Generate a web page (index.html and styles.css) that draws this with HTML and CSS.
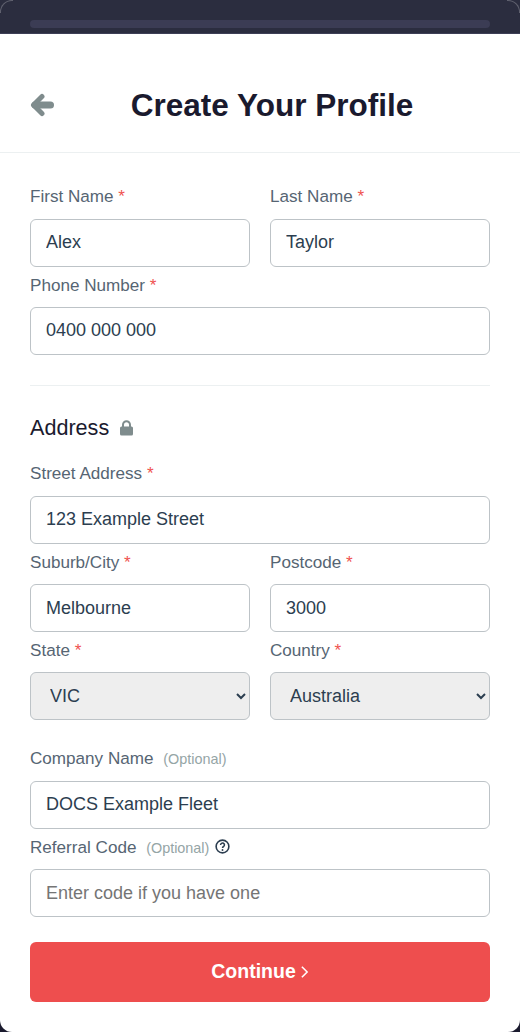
FILE: index.html
```html
<!DOCTYPE html>
<html lang="en">

<head>
    <meta charset="UTF-8">
    <meta name="viewport" content="width=device-width, initial-scale=1.0">
    <title>Create Your Profile</title>
    <link rel="stylesheet" href="styles.css">
</head>

<body>

    <div class="top-bar">
        <div class="progress"></div>
    </div>

    <div class="card">
        <div class="header">
            <a class="back" href="#" aria-label="Back">
                <svg viewBox="0 0 24 24" width="24" height="24">
                    <path d="M12 3.500 3.500 12l8.500 8.500" fill="none" stroke="#7f8c8d" stroke-width="5" stroke-linecap="round" stroke-linejoin="round" />
                    <path d="M5 12h15.500" fill="none" stroke="#7f8c8d" stroke-width="7" stroke-linecap="round" />
                </svg>
            </a>
            <h1>Create Your Profile</h1>
        </div>

        <form class="form">
            <div class="row group-start">
                <div class="field">
                    <label for="firstName">First Name <span class="req">*</span></label>
                    <input type="text" id="firstName" value="Alex">
                </div>
                <div class="field">
                    <label for="lastName">Last Name <span class="req">*</span></label>
                    <input type="text" id="lastName" value="Taylor">
                </div>
            </div>
            <div class="field">
                <label for="phone">Phone Number <span class="req">*</span></label>
                <input type="text" id="phone" value="0400 000 000">
            </div>

            <hr class="divider">

            <h2>Address
                <svg class="lock" viewBox="0 0 15 16" width="15" height="16">
                    <path d="M4 7V4.800a3.500 3.500 0 0 1 7 0V7" fill="none" stroke="#7f8c8d" stroke-width="2" />
                    <rect x="1" y="6.500" width="13" height="9" rx="1.500" fill="#7f8c8d" />
                </svg>
            </h2>

            <div class="field group-start wide-gap">
                <label for="street">Street Address <span class="req">*</span></label>
                <input type="text" id="street" value="123 Example Street">
            </div>
            <div class="row">
                <div class="field">
                    <label for="city">Suburb/City <span class="req">*</span></label>
                    <input type="text" id="city" value="Melbourne">
                </div>
                <div class="field">
                    <label for="postcode">Postcode <span class="req">*</span></label>
                    <input type="text" id="postcode" value="3000">
                </div>
            </div>
            <div class="row">
                <div class="field">
                    <label for="state">State <span class="req">*</span></label>
                    <select id="state">
                        <option>VIC</option>
                    </select>
                </div>
                <div class="field">
                    <label for="country">Country <span class="req">*</span></label>
                    <select id="country">
                        <option>Australia</option>
                    </select>
                </div>
            </div>

            <div class="field company group-start wide-gap">
                <label for="company">Company Name <span class="optional">(Optional)</span></label>
                <input type="text" id="company" value="DOCS Example Fleet">
            </div>
            <div class="field">
                <label for="referral">Referral Code <span class="optional">(Optional)</span>
                    <svg class="help" viewBox="0 0 16 16" width="15" height="15">
                        <circle cx="8" cy="8" r="6.800" fill="none" stroke="#2c3e50" stroke-width="1.700" />
                        <path d="M5.900 6.300a2.100 2 0 1 1 3.200 1.700c-.8.500-1.100.9-1.100 1.600" fill="none" stroke="#2c3e50" stroke-width="1.600" />
                        <circle cx="8" cy="11.700" r="1" fill="#2c3e50" />
                    </svg>
                </label>
                <input type="text" id="referral" placeholder="Enter code if you have one">
            </div>

            <button type="button" class="btn">Continue
                <svg viewBox="0 0 10 16" width="9" height="14">
                    <path d="M2 2l6 6-6 6" fill="none" stroke="#fff" stroke-width="1.800" />
                </svg>
            </button>
        </form>
    </div>

</body>

</html>
```

FILE: styles.css
```css
* {
    box-sizing: border-box;
}

body {
    margin: 0;
    height: 1032px;
    overflow: hidden;
    font-family: "Liberation Sans", Arial, sans-serif;
    background-color: #1a1a2e;
}

.top-bar {
    position: relative;
    height: 34px;
    padding: 20px 30px 0;
    background: #2b2d3f;
    border-bottom: 1px solid #3d3f56;
}

/* faint window corners */
.top-bar:before,
.top-bar:after {
    content: "";
    position: absolute;
    top: 0;
    width: 12px;
    height: 12px;
    border-top: 1px solid rgba(255, 255, 255, 0.25);
}

.top-bar:before {
    left: 0;
    border-left: 1px solid rgba(255, 255, 255, 0.25);
    border-top-left-radius: 12px;
}

.top-bar:after {
    right: 0;
    border-right: 1px solid rgba(255, 255, 255, 0.25);
    border-top-right-radius: 12px;
}

.progress {
    height: 8px;
    background: #3b3c54;
    border-radius: 4px;
}

.card {
    height: 998px;
    background: #fff;
    border-radius: 0 0 12px 12px;
}

.header {
    display: flex;
    align-items: center;
    height: 119px;
    padding: 24px 30px 0;
    border-bottom: 1px solid #ecf0f1;
}

.back {
    display: flex;
    width: 24px;
}

h1 {
    flex: 1;
    margin: 0;
    text-align: center;
    font-size: 31.500px;
    color: #1a1a2e;
}

.form {
    padding: 33px 30px 0;
}

.row {
    display: flex;
    gap: 20px;
}

.row .field {
    flex: 1;
    min-width: 0;
}

label {
    display: block;
    height: 22px;
    margin-bottom: 10px;
    font-size: 17.100px;
    line-height: 22px;
    color: #566573;
}

.group-start label {
    margin-bottom: 10.600px;
}

.req {
    color: #ef5350;
}

.optional {
    margin-left: 5px;
    font-size: 14.400px;
    color: #95a5a6;
}

.help {
    margin-left: 1px;
    vertical-align: -1px;
}

input,
select {
    display: block;
    width: 100%;
    height: 48px;
    padding: 0 15px;
    font-family: inherit;
    font-size: 18px;
    color: #2c3e50;
    background: #fff;
    border: 1px solid #bdc3c7;
    border-radius: 6px;
}

input::placeholder {
    color: #757575;
}

select {
    background: #eeeeee;
}

.field {
    margin-bottom: 8px;
}

.wide-gap {
    margin-bottom: 8.500px;
}

.divider {
    height: 1px;
    margin: 30.400px 0 0;
    border: none;
    background: #ecf0f1;
}

h2 {
    display: flex;
    align-items: center;
    gap: 10px;
    height: 26px;
    margin: 29px 0 22px;
    font-size: 21.600px;
    font-weight: normal;
    color: #1a1a2e;
}

.company {
    margin-top: 20px;
}

.btn {
    display: flex;
    align-items: center;
    justify-content: center;
    gap: 4px;
    width: 100%;
    height: 60px;
    padding: 0 0 1px;
    margin-top: 25px;
    border: none;
    border-radius: 6px;
    font-family: inherit;
    font-size: 19.500px;
    font-weight: bold;
    color: #fff;
    background: #ee4e4e;
    cursor: pointer;
}
```
